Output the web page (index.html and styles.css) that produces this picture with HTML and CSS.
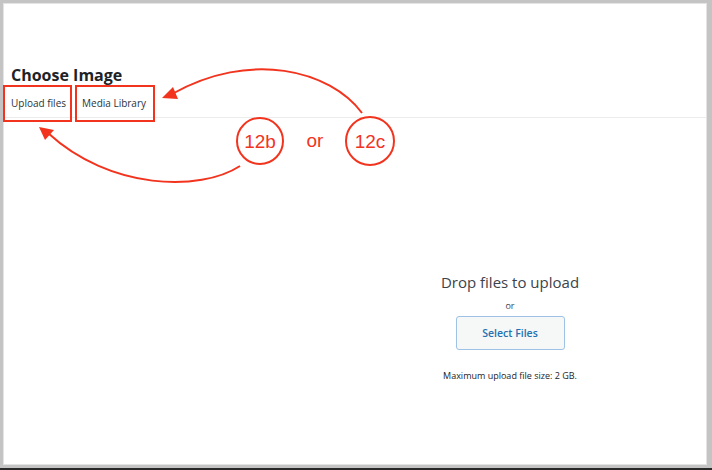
FILE: index.html
```html
<!DOCTYPE html>
<html lang="en">
<head>
  <meta charset="UTF-8">
  <title>Choose Image</title>
  <link rel="stylesheet" href="styles.css">
</head>
<body>
  <div class="frame">
    <div class="modal">
      <h1 class="modal-title">Choose Image</h1>
      <div class="tabs">
        <a class="tab" href="#">Upload files</a>
        <a class="tab" href="#">Media Library</a>
      </div>
      <div class="uploader">
        <div class="drop-box">
          <p class="drop-title">Drop files to upload</p>
          <p class="drop-or">or</p>
          <button class="select-btn">Select Files</button>
          <p class="max-size">Maximum upload file size: 2 GB.</p>
        </div>
      </div>
    </div>
  </div>

  <!-- annotations drawn over the screenshot -->
  <svg class="notes" width="712" height="470" viewBox="0 0 712 470">
    <g fill="none" stroke="#f2341f" stroke-width="2">
      <rect x="4" y="86" width="67" height="35"/>
      <rect x="76" y="86" width="78" height="35"/>
      <circle cx="260" cy="141" r="23"/>
      <circle cx="370" cy="141" r="24"/>
      <path d="M362 113 C330 70, 250 50, 172 94"/>
      <path d="M240 166 C200 192, 110 190, 48 133"/>
    </g>
    <g fill="#f2341f">
      <polygon points="162,98 173,87 178,99"/>
      <polygon points="39,127 54,130 45,140"/>
    </g>
    <g class="note-text" fill="#f2341f" text-anchor="middle">
      <text x="260" y="148">12b</text>
      <text x="315" y="147">or</text>
      <text x="370" y="148">12c</text>
    </g>
  </svg>
</body>
</html>
```

FILE: styles.css
```css
*{
  margin: 0;
  padding: 0;
  box-sizing: border-box;
}

body{
  position: relative;
  width: 712px;
  height: 470px;
  background: #2a2a2a;
  font-family: "Open Sans", "Noto Sans", sans-serif;
  overflow: hidden;
}

.frame{
  height: 468px;
  background: #c4c4c4;
  padding: 3px 5px 3px 3px;
}

.modal{
  height: 100%;
  background: #fff;
  border: 1px solid #e4e4e4;
  display: flex;
  flex-direction: column;
}

.modal-title{
  font-size: 16px;
  line-height: 22px;
  font-weight: 700;
  color: #1d2327;
  padding: 60px 0 0 7px;
}

.tabs{
  display: flex;
  height: 32px;
  border-bottom: 1px solid #ececec;
}

.tab{
  display: flex;
  align-items: center;
  padding: 3px 8px 0 7px;
  font-size: 10px;
  color: #2c3338;
  text-decoration: none;
}

.tab + .tab{
  padding-left: 8px;
}

.uploader{
  flex: 1;
  padding: 154px 0 0 310px;
}

.drop-box{
  display: flex;
  flex-direction: column;
  align-items: center;
  color: #3c434a;
}

.drop-title{
  font-size: 15px;
  line-height: 20px;
}

.drop-or{
  font-size: 9px;
  line-height: 12px;
  margin-top: 8px;
}

.select-btn{
  margin-top: 4px;
  width: 109px;
  height: 34px;
  background: #f6f7f7;
  border: 1px solid #9ec2e6;
  border-radius: 3px;
  color: #2271b1;
  font-family: inherit;
  font-size: 10.5px;
  font-weight: 600;
}

.max-size{
  font-size: 9px;
  line-height: 12px;
  margin-top: 20px;
  color: #1d2327;
}

.notes{
  position: absolute;
  top: 0;
  left: 0;
}

.note-text{
  font-family: "Liberation Sans", Arial, sans-serif;
  font-size: 19px;
}
```
